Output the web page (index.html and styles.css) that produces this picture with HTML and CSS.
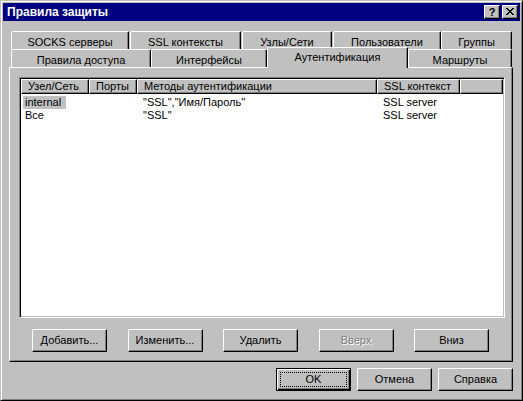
FILE: index.html
```html
<!DOCTYPE html>
<html lang="ru">
<head>
<meta charset="utf-8">
<title>Правила защиты</title>
<link rel="stylesheet" href="styles.css">
</head>
<body>
<div class="window">
  <div class="titlebar">
    <span class="title">Правила защиты</span>
    <div class="caption-buttons">
      <span class="cap-btn help">?</span>
      <span class="cap-btn close"><svg width="8" height="7" viewBox="0 0 8 7" shape-rendering="crispEdges"><path d="M0 0h2v1H0zM6 0h2v1H6zM1 1h2v1H1zM5 1h2v1H5zM2 2h4v1H2zM3 3h2v1H3zM2 4h4v1H2zM1 5h2v1H1zM5 5h2v1H5zM0 6h2v1H0zM6 6h2v1H6z" fill="#000"/></svg></span>
    </div>
  </div>
  <div class="client">
    <div class="tabs">
      <div class="tab-row back">
        <div class="tab t-socks">SOCKS серверы</div>
        <div class="tab t-ssl">SSL контексты</div>
        <div class="tab t-nodes">Узлы/Сети</div>
        <div class="tab t-users">Пользователи</div>
        <div class="tab t-groups">Группы</div>
      </div>
      <div class="tab-row front">
        <div class="tab t-rules">Правила доступа</div>
        <div class="tab t-ifaces">Интерфейсы</div>
        <div class="tab t-auth active">Аутентификация</div>
        <div class="tab t-routes">Маршруты</div>
      </div>
    </div>
    <div class="panel">
      <div class="listview">
        <div class="lv-header">
          <div class="hd c1">Узел/Сеть</div>
          <div class="hd c2">Порты</div>
          <div class="hd c3">Методы аутентификации</div>
          <div class="hd c4">SSL контекст</div>
          <div class="hd c5"></div>
        </div>
        <div class="lv-body">
          <div class="lv-row">
            <div class="cell c1"><span class="sel">internal</span></div>
            <div class="cell c2"></div>
            <div class="cell c3">"SSL","Имя/Пароль"</div>
            <div class="cell c4">SSL server</div>
          </div>
          <div class="lv-row">
            <div class="cell c1"><span class="item">Все</span></div>
            <div class="cell c2"></div>
            <div class="cell c3">"SSL"</div>
            <div class="cell c4">SSL server</div>
          </div>
        </div>
      </div>
      <div class="panel-buttons">
        <div class="btn">Добавить...</div>
        <div class="btn">Изменить...</div>
        <div class="btn">Удалить</div>
        <div class="btn disabled">Вверх</div>
        <div class="btn">Вниз</div>
      </div>
    </div>
    <div class="dialog-buttons">
      <div class="btn default"><span class="focus">OK</span></div>
      <div class="btn">Отмена</div>
      <div class="btn">Справка</div>
    </div>
  </div>
</div>
</body>
</html>
```

FILE: styles.css
```css
* { box-sizing: border-box; }

html, body {
  margin: 0;
  padding: 0;
}

body {
  width: 523px;
  height: 401px;
  overflow: hidden;
  background: #c0c0c0;
  font-family: "Liberation Sans", Arial, sans-serif;
  font-size: 11px;
  color: #000;
}

.window {
  width: 523px;
  height: 401px;
  border: 1px solid;
  border-color: #c0c0c0 #000 #000 #c0c0c0;
  box-shadow: inset 1px 1px #fff, inset -1px -1px #808080;
  padding: 2px;
  display: flex;
  flex-direction: column;
}

/* Title bar */
.titlebar {
  height: 18px;
  flex: none;
  background: #000080;
  display: flex;
  align-items: center;
  justify-content: space-between;
  padding: 0 2px 0 4px;
}

.title {
  color: #fff;
  font-weight: bold;
  font-size: 12px;
  line-height: 14px;
}

.caption-buttons {
  display: flex;
  gap: 2px;
}

.cap-btn {
  width: 16px;
  height: 14px;
  background: #c0c0c0;
  border: 1px solid;
  border-color: #fff #000 #000 #fff;
  box-shadow: inset -1px -1px #808080;
  display: flex;
  align-items: center;
  justify-content: center;
}

.cap-btn.help {
  font-weight: bold;
  font-size: 11px;
  line-height: 12px;
  padding-bottom: 1px;
}

.cap-btn.close svg {
  display: block;
  margin-bottom: 1px;
}

/* Client */
.client {
  flex: 1;
  display: flex;
  flex-direction: column;
  padding: 10px 0 0 6px;
}

.tabs {
  padding-left: 2px;
}

.tab-row {
  display: flex;
  height: 18px;
}

.tab {
  height: 18px;
  flex: none;
  border: 1px solid;
  border-bottom: none;
  border-color: #fff #000 transparent #fff;
  border-radius: 2px 2px 0 0;
  box-shadow: inset -1px 0 #808080;
  background: #c0c0c0;
  text-align: center;
  padding-top: 3px;
  line-height: 14px;
  white-space: nowrap;
}

.t-socks { width: 118px; margin-right: 1px; }
.t-ssl { width: 111px; margin-right: 1px; }
.t-nodes { width: 90px; margin-right: 1px; }
.t-users { width: 108px; }
.t-groups { width: 71px; }

.t-rules { width: 140px; }
.t-ifaces { width: 116px; }
.t-auth { width: 141px; }
.t-routes { width: 104px; }

.tab.active {
  position: relative;
  z-index: 1;
  height: 21px;
  margin-top: -2px;
  padding-top: 2px;
}

/* Panel */
.panel {
  width: 504px;
  height: 295px;
  flex: none;
  border: 1px solid;
  border-color: #fff #000 #000 #fff;
  box-shadow: inset -1px -1px #808080;
  padding: 9px 0 0 9px;
  display: flex;
  flex-direction: column;
}

.listview {
  width: 486px;
  height: 241px;
  flex: none;
  background: #fff;
  border: 1px solid;
  border-color: #808080 #fff #fff #808080;
  box-shadow: inset 1px 1px #000, inset -1px -1px #c0c0c0;
  padding: 1px;
}

.lv-header {
  display: flex;
  height: 15px;
}

.hd {
  height: 15px;
  flex: none;
  background: #c0c0c0;
  border: 1px solid;
  border-color: #fff #000 #000 #fff;
  box-shadow: inset -1px -1px #808080;
  line-height: 13px;
  padding-left: 6px;
  white-space: nowrap;
  overflow: hidden;
}

.c1 { width: 68px; }
.c2 { width: 48px; }
.c3 { width: 240px; }
.c4 { width: 83px; }
.c5 { width: 43px; }

.lv-body {
  padding-top: 2px;
}

.lv-row {
  display: flex;
  height: 13px;
  line-height: 13px;
}

.cell {
  flex: none;
  padding-left: 6px;
  white-space: nowrap;
}

.cell.c1 {
  padding-left: 2px;
}

.sel, .item {
  display: inline-block;
  padding: 0 5px 0 2px;
}

.sel {
  background: #c0c0c0;
}

/* Buttons */
.panel-buttons {
  display: flex;
  gap: 20.5px;
  margin-top: 11px;
  padding-left: 13px;
}

.btn {
  width: 75px;
  height: 23px;
  flex: none;
  background: #c0c0c0;
  border: 1px solid;
  border-color: #fff #000 #000 #fff;
  box-shadow: inset -1px -1px #808080;
  display: flex;
  align-items: center;
  justify-content: center;
  line-height: 13px;
  white-space: nowrap;
}

.btn.disabled {
  color: #808080;
  text-shadow: 1px 1px #fff;
}

.btn.default {
  border-color: #000;
  box-shadow: inset 1px 1px #fff, inset -1px -1px #000, inset -2px -2px #808080;
  align-items: stretch;
  padding: 3px;
}

.focus {
  flex: 1;
  border: 1px dotted #000;
  display: flex;
  align-items: center;
  justify-content: center;
}

.dialog-buttons {
  display: flex;
  justify-content: flex-end;
  gap: 6px;
  margin-top: 6px;
  padding-right: 7px;
}
```
